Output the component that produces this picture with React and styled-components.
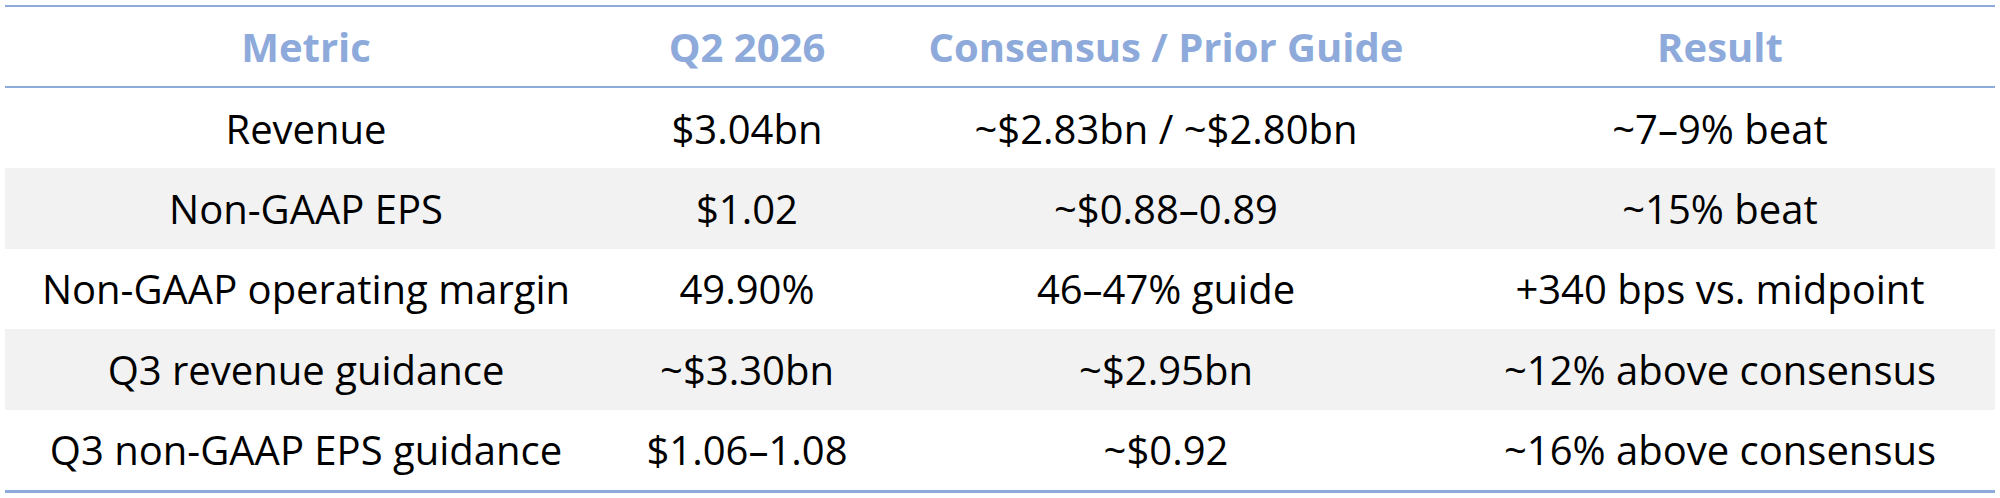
import React from "react";
import styled, { createGlobalStyle } from "styled-components";

const GlobalStyle = createGlobalStyle`
  html, body {
    margin: 0;
    padding: 0;
    background: #fff;
  }
  body {
    font-family: "Open Sans", "Noto Sans", sans-serif;
  }
`;

const Page = styled.div`
  padding: 5px 5px 0;
`;

const Table = styled.table`
  width: 1990px;
  border-collapse: collapse;
  table-layout: fixed;
  border-top: 2px solid #8eaadb;
  border-bottom: 3px solid #8eaadb;
`;

const HeadCell = styled.th`
  height: 79px;
  padding: 0;
  font-size: 40px;
  font-weight: 700;
  color: #8eaadb;
  text-align: center;
  vertical-align: middle;
  border-bottom: 2px solid #8eaadb;
`;

const Row = styled.tr`
  background: ${(p) => (p.$striped ? "#f2f2f2" : "#fff")};
`;

const Cell = styled.td`
  height: 80.4px;
  padding: 0;
  font-size: 40px;
  color: #000;
  text-align: center;
  vertical-align: middle;
  white-space: nowrap;
`;

const columns = [
  { title: "Metric", width: 602 },
  { title: "Q2 2026", width: 280 },
  { title: "Consensus / Prior Guide", width: 558 },
  { title: "Result", width: 550 },
];

const rows = [
  ["Revenue", "$3.04bn", "~$2.83bn / ~$2.80bn", "~7–9% beat"],
  ["Non-GAAP EPS", "$1.02", "~$0.88–0.89", "~15% beat"],
  ["Non-GAAP operating margin", "49.90%", "46–47% guide", "+340 bps vs. midpoint"],
  ["Q3 revenue guidance", "~$3.30bn", "~$2.95bn", "~12% above consensus"],
  ["Q3 non-GAAP EPS guidance", "$1.06–1.08", "~$0.92", "~16% above consensus"],
];

const App = () => {
  return (
    <Page>
      <GlobalStyle />
      <Table>
        <colgroup>
          {columns.map((col) => (
            <col key={col.title} style={{ width: col.width }} />
          ))}
        </colgroup>
        <thead>
          <tr>
            {columns.map((col) => (
              <HeadCell key={col.title}>{col.title}</HeadCell>
            ))}
          </tr>
        </thead>
        <tbody>
          {rows.map((row, i) => (
            <Row key={row[0]} $striped={i % 2 === 1}>
              {row.map((value, j) => (
                <Cell key={j}>{value}</Cell>
              ))}
            </Row>
          ))}
        </tbody>
      </Table>
    </Page>
  );
};

export default App;
